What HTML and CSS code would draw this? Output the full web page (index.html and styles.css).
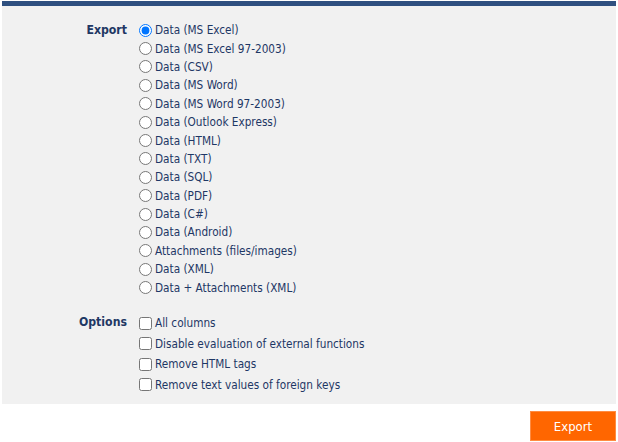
FILE: index.html
```html
<!DOCTYPE html>
<html>
<head>
<meta charset="utf-8">
<link rel="stylesheet" href="styles.css">
</head>
<body>
<div class="page">
  <div class="panel">
    <div class="form">
      <div class="label">Export</div>
      <div class="radios">
        <label class="opt"><input type="radio" name="fmt" checked>Data (MS Excel)</label>
        <label class="opt"><input type="radio" name="fmt">Data (MS Excel 97-2003)</label>
        <label class="opt"><input type="radio" name="fmt">Data (CSV)</label>
        <label class="opt"><input type="radio" name="fmt">Data (MS Word)</label>
        <label class="opt"><input type="radio" name="fmt">Data (MS Word 97-2003)</label>
        <label class="opt"><input type="radio" name="fmt">Data (Outlook Express)</label>
        <label class="opt"><input type="radio" name="fmt">Data (HTML)</label>
        <label class="opt"><input type="radio" name="fmt">Data (TXT)</label>
        <label class="opt"><input type="radio" name="fmt">Data (SQL)</label>
        <label class="opt"><input type="radio" name="fmt">Data (PDF)</label>
        <label class="opt"><input type="radio" name="fmt">Data (C#)</label>
        <label class="opt"><input type="radio" name="fmt">Data (Android)</label>
        <label class="opt"><input type="radio" name="fmt">Attachments (files/images)</label>
        <label class="opt"><input type="radio" name="fmt">Data (XML)</label>
        <label class="opt"><input type="radio" name="fmt">Data + Attachments (XML)</label>
      </div>
      <div class="label">Options</div>
      <div class="checks">
        <label class="chk"><input type="checkbox">All columns</label>
        <label class="chk"><input type="checkbox">Disable evaluation of external functions</label>
        <label class="chk"><input type="checkbox">Remove HTML tags</label>
        <label class="chk"><input type="checkbox">Remove text values of foreign keys</label>
      </div>
    </div>
  </div>
  <div class="actions">
    <button class="btn">Export</button>
  </div>
</div>
</body>
</html>
```
FILE: styles.css
```css
html, body {
  margin: 0;
  padding: 0;
  background: #ffffff;
}
body {
  font-family: "DejaVu Sans Condensed", "DejaVu Sans", sans-serif;
  font-size: 11.7px;
  color: #1e3765;
}
.page {
  padding: 1px 2px 0 2px;
}
.panel {
  background: #f1f1f1;
  border-top: 5px solid #2f5080;
  padding: 15px 0 9px 0;
}
.form {
  display: grid;
  grid-template-columns: 125px 1fr;
  column-gap: 12px;
  row-gap: 16px;
}
.label {
  text-align: right;
  font-weight: bold;
  font-size: 12.2px;
  line-height: 18.4px;
  color: #1f3864;
}
.radios, .checks {
  display: flex;
  flex-direction: column;
}
.opt, .chk {
  display: flex;
  align-items: center;
  height: 18.4px;
  white-space: nowrap;
}
.chk {
  height: 20.6px;
}
.opt input, .chk input {
  margin: 0 3px 0 0;
  width: 13px;
  height: 13px;
}
.actions {
  display: flex;
  justify-content: flex-end;
  padding-top: 7px;
}
.btn {
  width: 86px;
  height: 30px;
  background: #ff6600;
  border: 1px solid #ff8c42;
  color: #ffffff;
  font-family: "DejaVu Sans Condensed", "DejaVu Sans", sans-serif;
  font-size: 13px;
  padding: 0;
}
```
